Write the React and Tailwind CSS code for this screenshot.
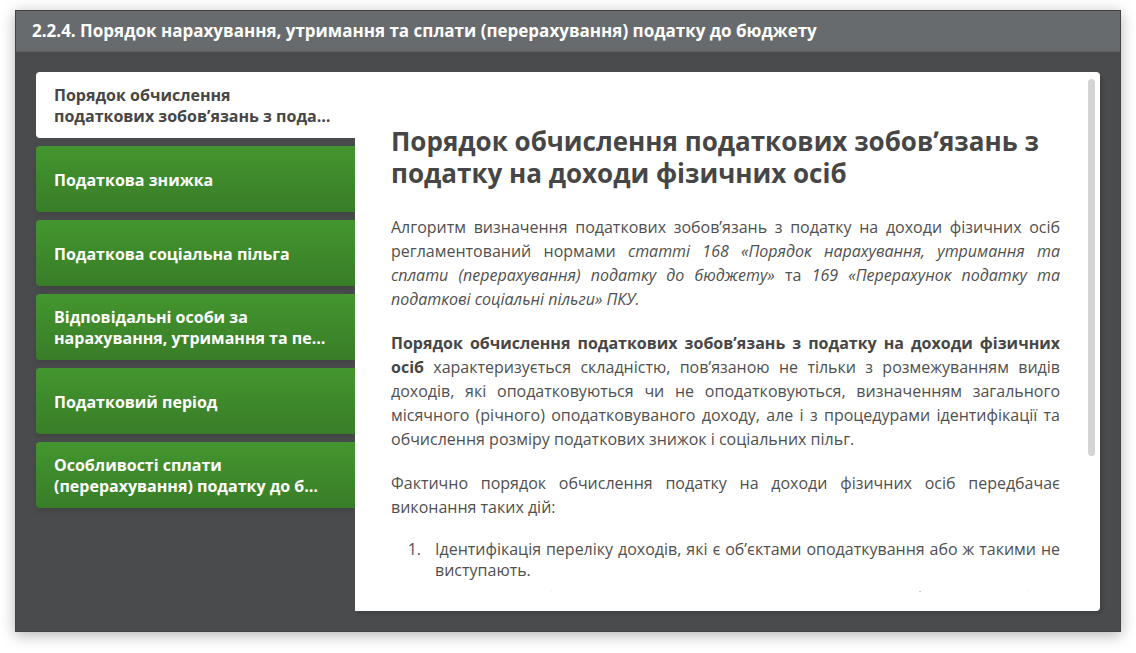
const tabs = [
  ["Порядок обчислення", "податкових зобовʼязань з пода…"],
  ["Податкова знижка"],
  ["Податкова соціальна пільга"],
  ["Відповідальні особи за", "нарахування, утримання та пе…"],
  ["Податковий період"],
  ["Особливості сплати", "(перерахування) податку до б…"],
];

const steps = [
  "Ідентифікація переліку доходів, які є об’єктами оподаткування або ж такими не виступають.",
  "Визначення бази оподаткування податком на доходи фізичних осіб та встановлення ставки податку.",
];

function Tab({ lines, active }) {
  return (
    <button
      type="button"
      role="tab"
      aria-selected={active}
      className={
        "flex h-[66px] w-full flex-col justify-center rounded-l pt-[2px] pl-[18px] text-left text-base leading-[21px] font-bold whitespace-nowrap " +
        (active
          ? "bg-white text-[#464646]"
          : "bg-linear-to-b from-[#43962f] to-[#397d28] text-white shadow-md")
      }
    >
      {lines.map((line) => (
        <span key={line}>{line}</span>
      ))}
    </button>
  );
}

export default function App() {
  return (
    <div className="bg-white px-[15px] pt-[10px] pb-[21px] font-['Open_Sans','Noto_Sans',sans-serif]">
      <main className="border border-[#404243] bg-[#4a4b4c] shadow-[0_3px_14px_rgba(0,0,0,0.3)]">
        <header className="border-b border-[#5c5f61] bg-[#686b6d] px-4 py-2">
          <h1 className="text-[17px] leading-6 font-bold text-white">
            2.2.4. Порядок нарахування, утримання та сплати (перерахування) податку до бюджету
          </h1>
        </header>
        <div className="flex p-5">
          <div role="tablist" aria-orientation="vertical" className="flex w-[319px] shrink-0 flex-col gap-2">
            {tabs.map((lines, i) => (
              <Tab key={lines[0]} lines={lines} active={i === 0} />
            ))}
          </div>
          <section
            role="tabpanel"
            className="flex min-w-0 flex-1 rounded-r bg-white pt-[7px] pr-[5px] pb-[19px] pl-9 shadow-[3px_3px_3px_rgba(0,0,0,0.12)]"
          >
            <div className="h-[513px] min-w-0 flex-1 overflow-hidden pt-[46px] text-base leading-6 text-[#505050]">
              <h2 className="mb-[26px] text-[26px] leading-8 font-bold text-[#464646]">
                Порядок обчислення податкових зобовʼязань з податку на доходи фізичних осіб
              </h2>
              <p className="mb-5 text-justify">
                Алгоритм визначення податкових зобов’язань з податку на доходи фізичних осіб регламентований нормами{" "}
                <em>статті 168 «Порядок нарахування, утримання та сплати (перерахування) податку до бюджету»</em> та{" "}
                <em>169 «Перерахунок податку та податкові соціальні пільги» ПКУ.</em>
              </p>
              <p className="mb-5 text-justify">
                <strong className="text-[#464646]">
                  Порядок обчислення податкових зобов’язань з податку на доходи фізичних осіб
                </strong>{" "}
                характеризується складністю, пов’язаною не тільки з розмежуванням видів доходів, які оподатковуються чи
                не оподатковуються, визначенням загального місячного (річного) оподатковуваного доходу, але і з
                процедурами ідентифікації та обчислення розміру податкових знижок і соціальних пільг.
              </p>
              <p className="mb-5 text-justify">
                Фактично порядок обчислення податку на доходи фізичних осіб передбачає виконання таких дій:
              </p>
              <ol className="flex flex-col gap-[7px] leading-[21px]">
                {steps.map((step, i) => (
                  <li key={step} className="flex">
                    <span className="w-[30px] shrink-0 text-right">{i + 1}.</span>
                    <span className="ml-[14px] flex-1 text-justify">{step}</span>
                  </li>
                ))}
              </ol>
            </div>
            <div className="ml-7 h-[377px] w-[7px] shrink-0 rounded-full bg-[#d4d4d4]" />
          </section>
        </div>
      </main>
    </div>
  );
}
